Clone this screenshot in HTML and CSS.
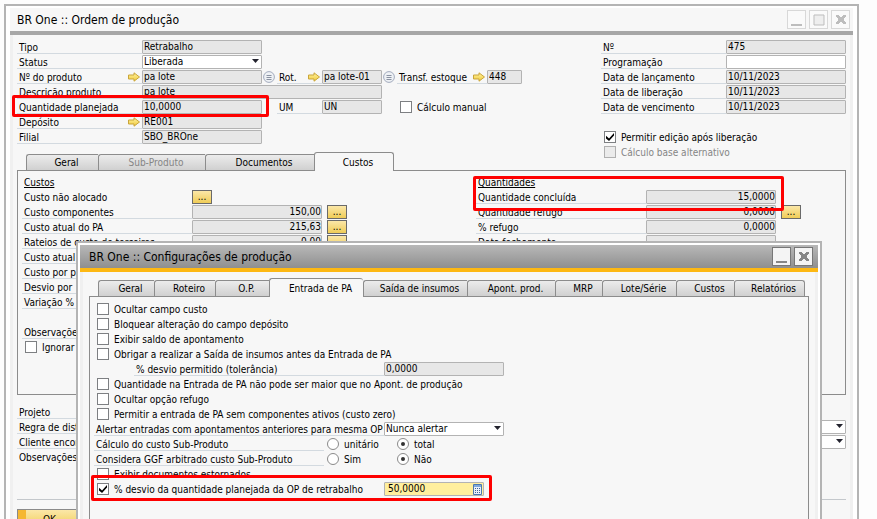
FILE: index.html
```html
<!DOCTYPE html>
<html lang="pt-BR">
<head>
<meta charset="utf-8">
<title>BR One :: Ordem de produção</title>
<link rel="stylesheet" href="styles.css">
</head>
<body>
<svg class="defs" aria-hidden="true">
  <defs>
    <linearGradient id="gold" x1="0" y1="0" x2="0" y2="1"><stop offset="0" stop-color="#fff3a0"/><stop offset="1" stop-color="#f0c93c"/></linearGradient>
    <symbol id="arrow" viewBox="0 0 12 10"><path d="M.5 3H6V.8L11.5 5 6 9.2V7H.5Z" fill="url(#gold)" stroke="#c9a53a"/></symbol>
    <symbol id="list" viewBox="0 0 12 12"><circle cx="6" cy="6" r="5.4" fill="#eef1f5" stroke="#a3abbd"/><path d="M3.5 4.5h5M3.5 6.5h5M3.5 8.5h5" stroke="#7e8798" stroke-width=".9"/></symbol>
    <symbol id="close" viewBox="0 0 10 9"><path d="M0 0h3v1h1v1h2V1h1V0h3v2H9v1H8v3h1v1h1v2H7V8H6V7H4v1H3v1H0V7h1V6h1V3H1V2H0Z" fill="currentColor"/></symbol>
    <symbol id="minimize" viewBox="0 0 12 12"><path d="M0 10h11v2H0z" fill="currentColor"/></symbol>
    <symbol id="maximize" viewBox="0 0 12 12"><path d="M1 1h10v10H1z" fill="#eee" stroke="currentColor"/></symbol>
    <symbol id="calc" viewBox="0 0 9 11"><path d="M.5.5h8v10h-8z" fill="#e8f0fa" stroke="#4a78b0"/><path d="M1 1h7v2H1z" fill="#7fa8dc"/><path d="M2 4.5h5M2 6.5h5M2 8.5h5" stroke="#3f6396" stroke-dasharray="1 1"/></symbol>
  </defs>
</svg>

<main class="desktop">
  <section class="window">
    <header class="titlebar">
      <h1>BR One :: Ordem de produção</h1>
      <div class="window-buttons">
        <button type="button" aria-label="Minimizar"><svg width="12" height="12"><use href="#minimize"/></svg></button>
        <button type="button" aria-label="Maximizar"><svg width="12" height="12"><use href="#maximize"/></svg></button>
        <button type="button" aria-label="Fechar"><svg width="10" height="9"><use href="#close"/></svg></button>
      </div>
    </header>
    <div class="content">
      <div class="header-form">
        <div class="form-left">
          <div class="row"><label class="label" for="tipo">Tipo</label><input class="field" id="tipo" value="Retrabalho" readonly></div>
          <div class="row"><label class="label" for="status">Status</label><span class="select"><select id="status"><option>Liberada</option></select></span></div>
          <div class="row">
            <label class="label" for="produto">Nº do produto<svg class="arrow"><use href="#arrow"/></svg></label><input class="field" id="produto" value="pa lote" readonly>
            <svg class="list"><use href="#list"/></svg>
            <label class="label short" for="rot">Rot.<svg class="arrow"><use href="#arrow"/></svg></label><input class="field short" id="rot" value="pa lote-01" readonly>
            <svg class="list"><use href="#list"/></svg>
            <label class="label medium" for="transf">Transf. estoque<svg class="arrow"><use href="#arrow"/></svg></label><input class="field tiny" id="transf" value="448" readonly>
          </div>
          <div class="row"><label class="label" for="descricao">Descrição produto</label><input class="field long" id="descricao" value="pa lote" readonly></div>
          <div class="row">
            <div class="highlighted row"><label class="label" for="qtd">Quantidade planejada</label><input class="field" id="qtd" value="10,0000" readonly><span class="mark mark-planned"></span></div>
            <span class="gap"></span>
            <label class="label short" for="um">UM</label><input class="field short" id="um" value="UN" readonly>
            <span class="gap"></span>
            <label class="check"><input type="checkbox">Cálculo manual</label>
          </div>
          <div class="row"><label class="label" for="deposito">Depósito<svg class="arrow"><use href="#arrow"/></svg></label><input class="field" id="deposito" value="RE001" readonly></div>
          <div class="row"><label class="label" for="filial">Filial</label><input class="field" id="filial" value="SBO_BROne" readonly></div>
        </div>
        <div class="form-right">
          <div class="row"><label class="label" for="numero">Nº</label><input class="field" id="numero" value="475" readonly></div>
          <div class="row"><label class="label" for="programacao">Programação</label><input class="field editable" id="programacao"></div>
          <div class="row"><label class="label" for="lancamento">Data de lançamento</label><input class="field" id="lancamento" value="10/11/2023" readonly></div>
          <div class="row"><label class="label" for="liberacao">Data de liberação</label><input class="field" id="liberacao" value="10/11/2023" readonly></div>
          <div class="row"><label class="label" for="vencimento">Data de vencimento</label><input class="field" id="vencimento" value="10/11/2023" readonly></div>
          <div class="row"></div>
          <label class="check row"><input type="checkbox" checked>Permitir edição após liberação</label>
          <label class="check row off"><input type="checkbox" disabled>Cálculo base alternativo</label>
        </div>
      </div>

      <nav class="tabs order-tabs">
        <button type="button">Geral</button>
        <button type="button" disabled>Sub-Produto</button>
        <button type="button">Documentos</button>
        <button type="button" class="active">Custos</button>
      </nav>
      <div class="pane order-pane">
        <div class="costs">
          <div class="row"><h2>Custos</h2></div>
          <div class="row"><span class="label plain">Custo não alocado</span><button type="button" class="more">...</button></div>
          <div class="row"><label class="label" for="componentes">Custo componentes</label><input class="field num" id="componentes" value="150,00" readonly><button type="button" class="more">...</button></div>
          <div class="row"><label class="label" for="atual">Custo atual do PA</label><input class="field num" id="atual" value="215,63" readonly><button type="button" class="more">...</button></div>
          <div class="row"><label class="label" for="rateios">Rateios de custo de terceiros</label><input class="field num" id="rateios" value="0,00" readonly><button type="button" class="more">...</button></div>
          <div class="row"><span class="label">Custo atual</span></div>
          <div class="row"><span class="label">Custo por p</span></div>
          <div class="row"><span class="label">Desvio por</span></div>
          <div class="row"><span class="label">Variação %</span></div>
          <div class="row"></div>
          <div class="row"><span class="label">Observaçõe</span></div>
          <label class="check row"><input type="checkbox">Ignorar</label>
        </div>
        <div class="quantities">
          <div class="highlighted">
            <div class="row"><h2>Quantidades</h2></div>
            <div class="row"><label class="label" for="concluida">Quantidade concluída</label><input class="field num" id="concluida" value="15,0000" readonly></div>
            <span class="mark mark-done"></span>
          </div>
          <div class="row"><label class="label" for="refugo">Quantidade refugo</label><input class="field num" id="refugo" value="0,0000" readonly><button type="button" class="more">...</button></div>
          <div class="row"><label class="label" for="prefugo">% refugo</label><input class="field num" id="prefugo" value="0,0000" readonly></div>
          <div class="row"><label class="label" for="fechamento">Data fechamento</label><input class="field num" id="fechamento" readonly></div>
        </div>
      </div>

      <div class="footer-form">
        <div class="row"><span class="label">Projeto</span></div>
        <div class="row"><label class="label" for="regra">Regra de dist</label><span class="select wide"><select id="regra"></select></span></div>
        <div class="row"><label class="label" for="cliente">Cliente encor</label><span class="select wide"><select id="cliente"></select></span></div>
        <div class="row"><span class="label plain">Observações</span></div>
      </div>
      <div class="actions"><button type="button" class="ok">OK</button></div>
    </div>
  </section>

  <section class="window dialog">
    <header class="titlebar">
      <h1>BR One :: Configurações de produção</h1>
      <div class="window-buttons">
        <button type="button" aria-label="Minimizar"><svg width="12" height="12"><use href="#minimize"/></svg></button>
        <button type="button" aria-label="Fechar"><svg width="10" height="9"><use href="#close"/></svg></button>
      </div>
    </header>
    <div class="content">
      <nav class="tabs config-tabs">
        <button type="button">Geral</button>
        <button type="button">Roteiro</button>
        <button type="button">O.P.</button>
        <button type="button" class="active">Entrada de PA</button>
        <button type="button">Saída de insumos</button>
        <button type="button">Apont. prod.</button>
        <button type="button">MRP</button>
        <button type="button">Lote/Série</button>
        <button type="button">Custos</button>
        <button type="button">Relatórios</button>
      </nav>
      <div class="pane config-pane">
        <label class="check row"><input type="checkbox">Ocultar campo custo</label>
        <label class="check row"><input type="checkbox">Bloquear alteração do campo depósito</label>
        <label class="check row"><input type="checkbox">Exibir saldo de apontamento</label>
        <label class="check row"><input type="checkbox">Obrigar a realizar a Saída de insumos antes da Entrada de PA</label>
        <div class="row nested"><label class="label" for="tolerancia">% desvio permitido (tolerância)</label><input class="field" id="tolerancia" value="0,0000" readonly></div>
        <label class="check row"><input type="checkbox">Quantidade na Entrada de PA não pode ser maior que no Apont. de produção</label>
        <label class="check row"><input type="checkbox">Ocultar opção refugo</label>
        <label class="check row"><input type="checkbox">Permitir a entrada de PA sem componentes ativos (custo zero)</label>
        <div class="row"><label class="label" for="alertar">Alertar entradas com apontamentos anteriores para mesma OP</label><span class="select"><select id="alertar"><option>Nunca alertar</option></select></span></div>
        <div class="row" role="radiogroup" aria-label="Cálculo do custo Sub-Produto"><span class="label choice">Cálculo do custo Sub-Produto</span><label class="radio"><input type="radio" name="calculo">unitário</label><label class="radio"><input type="radio" name="calculo" checked>total</label></div>
        <div class="row" role="radiogroup" aria-label="Considera GGF arbitrado custo Sub-Produto"><span class="label choice">Considera GGF arbitrado custo Sub-Produto</span><label class="radio"><input type="radio" name="ggf">Sim</label><label class="radio"><input type="radio" name="ggf" checked>Não</label></div>
        <label class="check row"><input type="checkbox">Exibir documentos estornados</label>
        <div class="row highlighted rework">
          <label class="check"><input type="checkbox" checked>% desvio da quantidade planejada da OP de retrabalho</label>
          <span class="calc-field"><input class="field" aria-label="% desvio" value="50,0000"><svg class="calc"><use href="#calc"/></svg></span>
          <span class="mark mark-rework"></span>
        </div>
      </div>
    </div>
  </section>
</main>
</body>
</html>
```
FILE: styles.css
```css
* { box-sizing: border-box; }

body {
  margin: 0;
  background: #fdfdfd;
  color: #000;
  font: 10px/13px "DejaVu Sans Condensed", "DejaVu Sans", sans-serif;
}

button, input, select { font: inherit; color: inherit; margin: 0; }
h1, h2 { margin: 0; font-weight: normal; }
svg { flex: none; display: block; }
.defs { position: absolute; width: 0; height: 0; }

.desktop {
  position: relative;
  height: 100vh;
  padding: 4px 18px 0 4px;
  overflow: hidden;
}

/* windows */
.window {
  min-height: 110vh;
  padding: 2px 4px;
  background: #fff;
  border: 2px solid #b4b4b4;
}

.titlebar {
  display: flex;
  justify-content: space-between;
  align-items: center;
  height: 27px;
  padding: 0 3px 0 7px;
  background: #f7f7f7;
  border-bottom: 4px solid #a7a7a7;
}
.titlebar h1 { font-size: 12px; line-height: 18px; padding-top: 1px; white-space: nowrap; }

.window-buttons { display: flex; gap: 3px; }
.window-buttons button {
  display: flex;
  align-items: center;
  justify-content: center;
  width: 19px;
  height: 19px;
  padding: 0;
  background: #fafafa;
  border: 1px solid #d8d8d8;
  color: #bdbdbd;
}

.content {
  min-height: 110vh;
  padding: 5px 4px 0;
  background: #f7f7f7;
  border: solid #f0f0f0;
  border-width: 0 3px;
}

.dialog {
  position: absolute;
  top: 241px;
  left: 76px;
  right: 55px;
  padding: 2px;
}
.dialog .titlebar {
  padding: 0 5px 0 9px;
  background: linear-gradient(#b8b8b8, #8f8f8f);
  border-bottom-color: #fdb813;
}
.dialog .window-buttons button {
  background: #f4f4f4;
  border-color: #777;
  color: #868686;
}
.dialog .content { padding: 6px 6px 0; }

/* form rows */
.row { display: flex; height: 15px; align-items: flex-start; }

.label {
  display: flex;
  flex: none;
  justify-content: space-between;
  width: 125px;
  height: 14px;
  padding: 2px 2px 0;
  line-height: 12px;
  border-bottom: 1px solid #d3dae0;
  white-space: nowrap;
}
.label.plain { border-bottom-color: transparent; }
.label.short { width: 45px; }
.label.medium { width: 90px; }

.field {
  flex: none;
  width: 120px;
  height: 14px;
  padding: 0 1px;
  line-height: 14px;
  background: #e7e7e7;
  border: 1px solid #b3b3b3;
  border-radius: 1px;
  outline: 0;
}
.field.editable { background: #fff; }
.field.short { width: 60px; }
.field.tiny { width: 35px; }
.field.long { width: 240px; }
.field.num { text-align: right; padding: 0; }

.select { position: relative; flex: none; width: 120px; height: 14px; }
.select.wide { flex: 1; }
.select select {
  appearance: none;
  display: block;
  width: 100%;
  height: 14px;
  padding: 0 1px;
  line-height: 12px;
  background: #fff;
  border: 1px solid #b3b3b3;
  border-radius: 1px;
}
.select::after {
  content: "";
  position: absolute;
  top: 4px;
  right: 3px;
  width: 7px;
  height: 4px;
  background: #23232e;
  clip-path: polygon(0 0, 100% 0, 50% 100%);
  pointer-events: none;
}

.arrow { width: 12px; height: 10px; }
.list { width: 12px; height: 12px; margin: 1px 2px 0 1px; }
.gap { width: 15px; flex: none; }

.check, .radio {
  display: flex;
  height: 15px;
  gap: 5px;
  line-height: 15px;
  white-space: nowrap;
}
.check input, .radio input {
  appearance: none;
  flex: none;
  position: relative;
  width: 12px;
  height: 12px;
  margin-top: 1px;
  background: #fff;
  border: 1px solid #7d7f82;
}
.check input:checked::before {
  content: "";
  position: absolute;
  inset: 1px;
  background: #000;
  clip-path: polygon(0 35%, 38% 68%, 100% 0, 100% 30%, 38% 100%, 0 68%);
}
.check input:disabled { background: #ebebeb; border-color: #b0b0b0; }
.check.off { color: #858585; }
.radio { width: 70px; }
.radio input { border-color: #8a8a8a; border-radius: 50%; }
.radio input:checked::before {
  content: "";
  position: absolute;
  inset: 3px;
  background: #333;
  border-radius: 50%;
}

.more {
  width: 20px;
  height: 14px;
  padding: 0;
  line-height: 10px;
  background: linear-gradient(#fbe7a8, #f0cd57);
  border: 1px solid #6a6a6a;
}
.field + .more { margin-left: 5px; }

/* main form */
.header-form { display: flex; justify-content: space-between; height: 105px; }
.form-left .check { padding-left: 3px; }
.form-right .check { padding-left: 3px; }

/* tabs */
.tabs { display: grid; align-items: end; height: 18px; }
.tabs button {
  height: 16px;
  padding: 0 0 0 8px;
  line-height: 14px;
  white-space: nowrap;
  background: linear-gradient(#ececec, #d0d0d0);
  border: 1px solid #8c8c8c;
  border-width: 1px 0 0 1px;
  border-radius: 3px 0 0 0;
}
.tabs button:last-child { border-right-width: 1px; border-top-right-radius: 3px; }
.tabs button:disabled { color: #858585; }
.tabs button.active {
  position: relative;
  z-index: 1;
  height: 19px;
  margin-bottom: -1px;
  padding-top: 1px;
  background: #f7f7f7;
  border-radius: 3px 3px 0 0;
}
.order-tabs {
  grid-template-columns: 72px 107px 109px 80px;
  width: max-content;
  margin: 7px 0 0 9px;
}
.config-tabs {
  grid-template-columns: 56px 61px 54px 94px 104px 88px 47px 74px 58px 71px;
  margin-left: 9px;
}

.pane { border: 1px solid #8c8c8c; }
.order-pane {
  display: flex;
  justify-content: space-between;
  height: 225px;
  padding: 4px 69px 0 4px;
}
.order-pane .label { width: 170px; }
.order-pane .field { width: 130px; }
.order-pane h2 { margin-left: 2px; }
.order-pane .check { padding-left: 3px; }
.quantities .more { margin-right: -25px; }
h2 { font-size: 10px; line-height: 15px; text-decoration: underline; }

.footer-form { margin-top: 10px; padding-bottom: 34px; border-bottom: 1px solid #c4c8cc; }
.actions { padding-top: 9px; }
.ok {
  display: block;
  width: 65px;
  height: 20px;
  padding: 0;
  background: linear-gradient(90deg, #f5b731 8px, transparent 8px), linear-gradient(#fbe7a8, #f0cd57);
  border: 1px solid #8a8a8a;
}

/* settings dialog */
.config-pane { min-height: 110vh; padding: 5px 4px 0; }
.config-pane .check { padding-left: 3px; }
.config-pane .label { width: 290px; }
.config-pane .label.choice { width: 230px; margin-right: 3px; }
.config-pane .nested { padding-left: 40px; }
.config-pane .nested .label { width: 250px; }
.rework .check { width: 290px; }
.calc-field { position: relative; }
.calc-field .field {
  display: block;
  width: 100px;
  padding-left: 3px;
  background: #ffef9e;
}
.calc { position: absolute; top: 2px; right: 2px; width: 9px; height: 11px; }

/* red emphasis frames */
.highlighted { position: relative; }
.mark {
  position: absolute;
  z-index: 2;
  border: 3px solid #fe0000;
  border-radius: 2px;
  pointer-events: none;
}
.mark-planned { inset: -5px -7px -2px -5px; }
.mark-done { inset: 1px -8px -6px -3px; }
.mark-rework { inset: -7px auto -4px -3px; width: 401px; }
```
